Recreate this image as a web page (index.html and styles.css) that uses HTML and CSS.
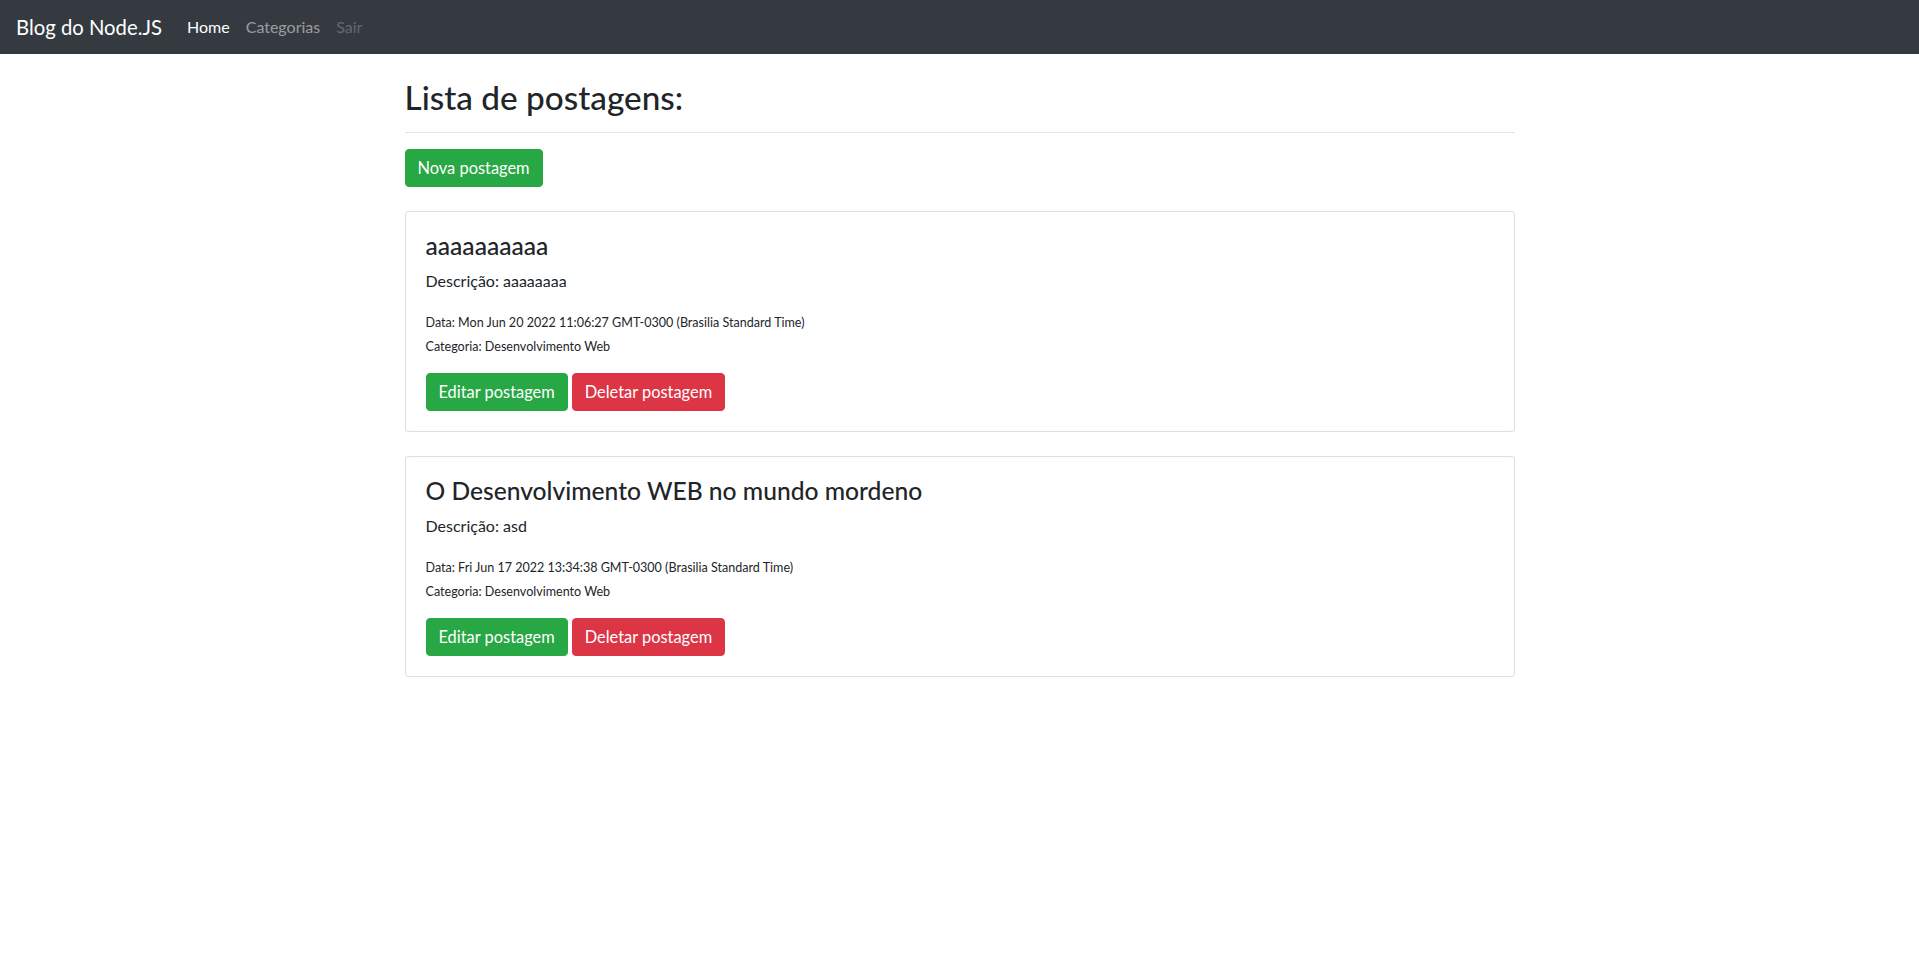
FILE: index.html
```html
<!DOCTYPE html>
<html lang="pt-BR">
<head>
<meta charset="utf-8">
<title>Blog do Node.JS</title>
<link rel="stylesheet" href="styles.css">
</head>
<body>
<nav class="navbar">
  <a class="brand" href="#">Blog do Node.JS</a>
  <ul class="nav">
    <li><a class="nav-link active" href="#">Home</a></li>
    <li><a class="nav-link" href="#">Categorias</a></li>
    <li><a class="nav-link disabled" href="#">Sair</a></li>
  </ul>
</nav>
<main class="container">
  <h2 class="page-title">Lista de postagens:</h2>
  <hr class="divider">
  <a class="btn btn-success" href="#">Nova postagem</a>

  <div class="card">
    <div class="card-body">
      <h4 class="post-title">aaaaaaaaaa</h4>
      <p class="post-desc">Descrição: aaaaaaaa</p>
      <p class="post-meta"><small>Data: Mon Jun 20 2022 11:06:27 GMT-0300 (Brasilia Standard Time)</small><br><small>Categoria: Desenvolvimento Web</small></p>
      <div class="actions">
        <a class="btn btn-success" href="#">Editar postagem</a>
        <a class="btn btn-danger" href="#">Deletar postagem</a>
      </div>
    </div>
  </div>

  <div class="card">
    <div class="card-body">
      <h4 class="post-title">O Desenvolvimento WEB no mundo mordeno</h4>
      <p class="post-desc">Descrição: asd</p>
      <p class="post-meta"><small>Data: Fri Jun 17 2022 13:34:38 GMT-0300 (Brasilia Standard Time)</small><br><small>Categoria: Desenvolvimento Web</small></p>
      <div class="actions">
        <a class="btn btn-success" href="#">Editar postagem</a>
        <a class="btn btn-danger" href="#">Deletar postagem</a>
      </div>
    </div>
  </div>
</main>
</body>
</html>
```
FILE: styles.css
```css
* { box-sizing: border-box; }
html, body { margin: 0; }
body {
  font-family: "Lato", "Noto Sans", sans-serif;
  font-size: 16px;
  line-height: 1.5;
  color: #212529;
  background: #fff;
}
a { text-decoration: none; }

.navbar {
  display: flex;
  align-items: center;
  height: 54px;
  padding: 0 16px;
  background: #343a40;
}
.brand {
  font-size: 20.3px;
  line-height: 30px;
  color: #fff;
  margin-right: 17px;
  padding: 5px 0;
}
.nav {
  display: flex;
  list-style: none;
  margin: 0;
  padding: 0;
}
.nav-link {
  display: block;
  padding: 8px 8px;
  color: rgba(255,255,255,.5);
}
.nav-link.active { color: #fff; }
.nav-link.disabled { color: rgba(255,255,255,.25); }

.container {
  max-width: 1140px;
  margin: 0 auto;
  padding: 24px 15px 0;
}
.page-title {
  font-size: 33.3px;
  font-weight: 500;
  line-height: 38.4px;
  margin: 0 0 8px;
}
.divider {
  border: 0;
  border-top: 1px solid rgba(0,0,0,.1);
  margin: 16px 0;
}
.btn {
  display: inline-block;
  font-size: 16.4px;
  line-height: 24px;
  padding: 6px 12px;
  border: 1px solid transparent;
  border-radius: 4px;
  color: #fff;
  white-space: nowrap;
}
.btn-success { background: #28a745; border-color: #28a745; }
.btn-danger { background: #dc3545; border-color: #dc3545; }

.card {
  margin-top: 24px;
  border: 1px solid rgba(0,0,0,.125);
  border-radius: 4px;
  background: #fff;
}
.card-body { padding: 20px; }
.post-title {
  font-size: 24.6px;
  font-weight: 500;
  line-height: 28.8px;
  margin: 0 0 8px;
}
.post-desc { margin: 0 0 16px; }
.post-meta { margin: 0 0 16px; }
.post-meta small { font-size: 12.55px; }
.actions {
  display: flex;
  gap: 4px;
}
```
